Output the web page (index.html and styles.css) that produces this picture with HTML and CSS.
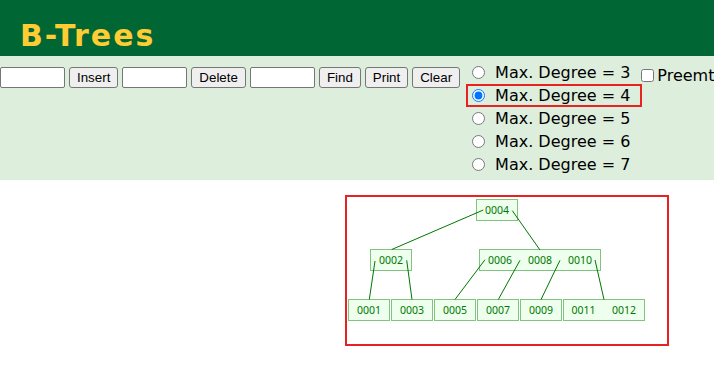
FILE: index.html
```html
<!DOCTYPE html>
<html>
<head>
  <title>B-Trees</title>
  <link rel="stylesheet" href="styles.css">
</head>
<body>
  <div id="header">
    <h1>B-Trees</h1>
  </div>
  <div id="controls">
    <div class="actions">
      <input type="text" class="field"><button>Insert</button>
      <input type="text" class="field"><button>Delete</button>
      <input type="text" class="field"><button>Find</button>
      <button>Print</button>
      <button>Clear</button>
    </div>
    <div class="degrees">
      <label class="option"><input type="radio" name="degree">Max. Degree = 3</label>
      <label class="option"><input type="radio" name="degree" checked>Max. Degree = 4</label>
      <label class="option"><input type="radio" name="degree">Max. Degree = 5</label>
      <label class="option"><input type="radio" name="degree">Max. Degree = 6</label>
      <label class="option"><input type="radio" name="degree">Max. Degree = 7</label>
    </div>
    <label class="preempt"><input type="checkbox">Preemtive Split / Merge (Even max degree only)</label>
  </div>
  <div id="canvas">
    <svg width="714" height="185" viewBox="0 0 714 185">
      <g class="nodes">
        <rect x="476.5" y="19.5" width="41" height="21"/>
        <rect x="370.5" y="69.5" width="41" height="21"/>
        <rect x="479.5" y="69.5" width="121" height="21"/>
        <rect x="348.5" y="119.5" width="41" height="21"/>
        <rect x="391.5" y="119.5" width="41" height="21"/>
        <rect x="434.5" y="119.5" width="41" height="21"/>
        <rect x="477.5" y="119.5" width="41" height="21"/>
        <rect x="520.5" y="119.5" width="41" height="21"/>
        <rect x="563.5" y="119.5" width="81" height="21"/>
      </g>
      <g class="edges">
        <line x1="483.3" y1="30" x2="391.7" y2="69.5"/>
        <line x1="512.3" y1="30.7" x2="540" y2="70"/>
        <line x1="375" y1="81" x2="369.3" y2="119.5"/>
        <line x1="406.7" y1="80.3" x2="412" y2="119.5"/>
        <line x1="485" y1="79.7" x2="455" y2="119.5"/>
        <line x1="520" y1="80.3" x2="498.3" y2="119.5"/>
        <line x1="560" y1="80.3" x2="541" y2="119.5"/>
        <line x1="595" y1="80" x2="604" y2="119.5"/>
      </g>
      <g class="keys">
        <text x="497" y="33.6">0004</text>
        <text x="391" y="83.6">0002</text>
        <text x="500" y="83.6">0006</text>
        <text x="540" y="83.6">0008</text>
        <text x="580" y="83.6">0010</text>
        <text x="369" y="133.6">0001</text>
        <text x="412" y="133.6">0003</text>
        <text x="455" y="133.6">0005</text>
        <text x="498" y="133.6">0007</text>
        <text x="541" y="133.6">0009</text>
        <text x="583.5" y="133.6">0011</text>
        <text x="624" y="133.6">0012</text>
      </g>
    </svg>
  </div>
  <div class="mark mark-degree"></div>
  <div class="mark mark-tree"></div>
</body>
</html>
```

FILE: styles.css
```css
html { overflow: hidden; }
body { margin: 0; padding: 0; font-family: "DejaVu Sans", Verdana, sans-serif; background-color: #fff; }
#header { background-color: #006633; height: 56px; }
#header h1 { margin: 0; padding: 21px 0 0 20px; font-size: 30px; line-height: 1; letter-spacing: 2px; font-weight: bold; color: #ffcc33; }
#controls { display: flex; align-items: flex-start; height: 124px; background-color: #ddeedd; }
.actions { display: flex; gap: 4px; margin-top: 11px; flex-shrink: 0; }
.field { box-sizing: border-box; width: 65px; height: 21px; margin: 0; padding: 1px 2px; border: 1px solid #767676; border-radius: 2px; background: #fff; font: 13.33px "Liberation Sans", Arial, sans-serif; }
button { box-sizing: border-box; height: 21px; margin: 0; padding: 1px 7px; border: 1px solid #767676; border-radius: 3px; background-color: #efefef; color: #000; font: 13.33px "Liberation Sans", Arial, sans-serif; }
.degrees { margin-left: 7px; padding-top: 5px; flex-shrink: 0; }
.option { display: flex; align-items: center; height: 23px; font-size: 16px; color: #000; white-space: nowrap; }
.option input { width: 13px; height: 13px; margin: 0 10px 0 5px; }
.preempt { display: flex; align-items: center; height: 23px; margin: 8px 0 0 11px; font-size: 16px; white-space: nowrap; flex-shrink: 0; }
.preempt input { width: 13px; height: 13px; margin: 0 3px 0 0; }
#canvas { height: 185px; }
#canvas svg { display: block; }
.nodes rect { fill: #eeffee; stroke: #80c480; stroke-width: 1; }
.edges line { stroke: #007700; stroke-width: 1; }
.keys text { fill: #007700; font-family: "Noto Sans", sans-serif; font-size: 10.5px; text-anchor: middle; }
.mark { position: absolute; box-sizing: border-box; border: 2px solid #e82222; }
.mark-degree { left: 466px; top: 84px; width: 176px; height: 23px; }
.mark-tree { left: 345px; top: 195px; width: 324px; height: 151px; }
```
